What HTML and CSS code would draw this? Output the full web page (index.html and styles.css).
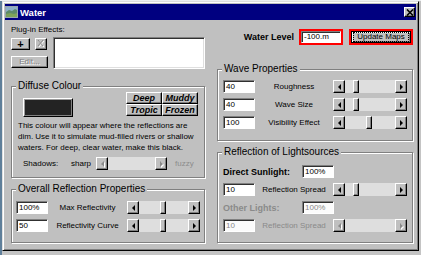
FILE: index.html
```html
<!DOCTYPE html>
<html>
<head>
<meta charset="utf-8">
<title>Water</title>
<link rel="stylesheet" href="styles.css">
</head>
<body>
<div class="desk">
  <div class="window">
    <div class="titlebar">
      <svg class="appicon" width="13" height="12" viewBox="0 0 13 12">
        <rect width="13" height="12" fill="#9aa6b0"/>
        <rect x="1" y="1" width="11" height="10" fill="#8fb0c8"/>
        <path d="M1 6 L4 4 L7 5 L10 3 L12 4 V11 H1Z" fill="#5d8a6a"/>
        <path d="M1 8 L5 7 L9 8 L12 7 V11 H1Z" fill="#7ea35a"/>
      </svg>
      <span class="title">Water</span>
      <span class="close">
        <svg width="8" height="7" viewBox="0 0 8 7"><path d="M1 0.5 L7 6.5 M7 0.5 L1 6.5" stroke="#000" stroke-width="1.6"/></svg>
      </span>
    </div>
    <div class="client">
      <div class="col">
        <div class="plug-label">Plug-in Effects:</div>
        <div class="plug-body">
          <div class="plug-btns">
            <div class="btn-row">
              <button class="btn add">+</button>
              <button class="btn del" disabled>
                <svg width="8" height="8" viewBox="0 0 8 8"><path d="M2 1 L7 7 M7 1 L2 7" stroke="#fff" stroke-width="1"/><path d="M1 0 L6 6 M6 0 L1 6" stroke="#8a8a8a" stroke-width="1"/></svg>
              </button>
            </div>
            <button class="btn edit" disabled>Edit...</button>
          </div>
          <div class="listbox"></div>
        </div>

        <fieldset class="group diffuse">
          <legend>Diffuse Colour</legend>
          <div class="gbody">
            <div class="top-row">
              <div class="swatch"></div>
              <div class="presets">
                <button class="btn preset">Deep</button>
                <button class="btn preset">Muddy</button>
                <button class="btn preset">Tropic</button>
                <button class="btn preset">Frozen</button>
              </div>
            </div>
            <p class="desc">This colour will appear where the reflections are<br>dim. Use it to simulate mud-filled rivers or shallow<br>waters. For deep, clear water, make this black.</p>
            <div class="shadow-row">
              <span class="sh-label">Shadows:</span>
              <span class="sh-sharp">sharp</span>
              <div class="sb sb-shadow disabled"><span class="arr l"></span><span class="track"></span><span class="arr r"></span></div>
              <span class="sh-fuzzy">fuzzy</span>
            </div>
          </div>
        </fieldset>

        <fieldset class="group overall">
          <legend>Overall Reflection Properties</legend>
          <div class="gbody rows">
            <div class="row">
              <div class="field">100%</div>
              <span class="rlabel">Max Reflectivity</span>
              <div class="sb"><span class="arr l"></span><span class="track"><span class="thumb" style="margin-left:21px"></span></span><span class="arr r"></span></div>
            </div>
            <div class="row">
              <div class="field">50</div>
              <span class="rlabel">Reflectivity Curve</span>
              <div class="sb"><span class="arr l"></span><span class="track"><span class="thumb" style="margin-left:21px"></span></span><span class="arr r"></span></div>
            </div>
          </div>
        </fieldset>
      </div>

      <div class="col">
        <div class="water-row">
          <span class="wl-label">Water Level</span>
          <div class="redframe wl-frame"><div class="field wl-field">-100.m</div></div>
          <div class="redframe up-frame"><button class="btn default"><span class="focus">Update Maps</span></button></div>
        </div>

        <fieldset class="group wave">
          <legend>Wave Properties</legend>
          <div class="gbody rows">
            <div class="row">
              <div class="field">40</div>
              <span class="rlabel">Roughness</span>
              <div class="sb"><span class="arr l"></span><span class="track"><span class="thumb" style="margin-left:8px"></span></span><span class="arr r"></span></div>
            </div>
            <div class="row">
              <div class="field">40</div>
              <span class="rlabel">Wave Size</span>
              <div class="sb"><span class="arr l"></span><span class="track"><span class="thumb" style="margin-left:8px"></span></span><span class="arr r"></span></div>
            </div>
            <div class="row">
              <div class="field">100</div>
              <span class="rlabel">Visibility Effect</span>
              <div class="sb"><span class="arr l"></span><span class="track"><span class="thumb" style="margin-left:21px"></span></span><span class="arr r"></span></div>
            </div>
          </div>
        </fieldset>

        <fieldset class="group refl">
          <legend>Reflection of Lightsources</legend>
          <div class="gbody rows">
            <div class="lrow">
              <span class="blabel">Direct Sunlight:</span>
              <div class="field">100%</div>
            </div>
            <div class="row">
              <div class="field">10</div>
              <span class="rlabel">Reflection Spread</span>
              <div class="sb"><span class="arr l"></span><span class="track"><span class="thumb" style="margin-left:8px"></span></span><span class="arr r"></span></div>
            </div>
            <div class="lrow off">
              <span class="blabel">Other Lights:</span>
              <div class="field">100%</div>
            </div>
            <div class="row off">
              <div class="field">10</div>
              <span class="rlabel">Reflection Spread</span>
              <div class="sb disabled"><span class="arr l"></span><span class="track"></span><span class="arr r"></span></div>
            </div>
          </div>
        </fieldset>
      </div>
    </div>
  </div>
</div>
</body>
</html>
```

FILE: styles.css
```css
* { box-sizing: border-box; margin: 0; padding: 0; }

html, body {
  width: 421px;
  height: 255px;
  overflow: hidden;
}

body {
  font-family: "Liberation Sans", Arial, sans-serif;
  font-size: 8px;
  color: #000;
  background: #c6c6c6;
}

.desk {
  width: 421px;
  height: 255px;
  padding: 1px 0 0 2px;
  background:
    linear-gradient(#eef0f2 0 1px, transparent 1px),
    linear-gradient(90deg, #5f7f9a 0 2px, transparent 2px),
    #c4c4c4;
}

.window {
  width: 417px;
  height: 250px;
  background: #c0c0c0;
  border: 1px solid;
  border-color: #dfdfdf #000 #000 #dfdfdf;
  box-shadow: inset 1px 1px #fff, inset -1px -1px #808080;
  padding: 2px;
  display: flex;
  flex-direction: column;
}

/* title bar */
.titlebar {
  height: 16px;
  flex: none;
  background: #000080;
  display: flex;
  align-items: center;
}
.appicon { display: block; margin-right: 2px; }
.title {
  color: #fff;
  font-weight: bold;
  font-size: 9.5px;
  flex: 1;
}
.close {
  width: 11px;
  height: 10px;
  margin-right: 1px;
  background: #c0c0c0;
  border: 1px solid;
  border-color: #fff #000 #000 #fff;
  box-shadow: inset -1px -1px #808080;
  display: flex;
  align-items: center;
  justify-content: center;
}
.close svg { display: block; }

/* client */
.client {
  flex: 1;
  display: grid;
  grid-template-columns: 194px 196px;
  column-gap: 12px;
  padding: 5px 3px 0 6px;
}
.col { display: flex; flex-direction: column; }

/* generic controls */
.btn {
  font: inherit;
  color: #000;
  background: #c0c0c0;
  border: 1px solid;
  border-color: #fff #000 #000 #fff;
  box-shadow: inset -1px -1px #808080;
  padding: 0;
  display: flex;
  align-items: center;
  justify-content: center;
  line-height: 1;
}
.btn:disabled { color: #808080; text-shadow: 1px 1px #fff; }

.field {
  height: 13px;
  background: #fff;
  border: 1px solid;
  border-color: #808080 #fff #fff #808080;
  box-shadow: inset 1px 1px #303030;
  padding: 0 2px;
  line-height: 11px;
  white-space: nowrap;
}

/* plug-in effects */
.plug-label { line-height: 10px; height: 10px; margin-bottom: 2px; }
.plug-body { display: flex; height: 32px; }
.plug-btns {
  width: 37px;
  display: flex;
  flex-direction: column;
  justify-content: space-between;
  padding: 1px 0;
}
.btn-row { display: flex; gap: 5px; }
.add { width: 19px; height: 12px; font-weight: bold; font-size: 11px; }
.del { width: 12px; height: 12px; }
.del svg { display: block; }
.edit { width: 37px; height: 12px; }
.listbox {
  flex: 1;
  margin-left: 5px;
  background: #fff;
  border: 1px solid;
  border-color: #808080 #fff #fff #808080;
  box-shadow: inset 1px 1px #303030, inset -1px -1px #dfdfdf;
}

/* group boxes */
.group {
  border: 1px solid #808080;
  box-shadow: inset 1px 1px #fff, 1px 1px #fff;
  padding: 0;
  margin: 0;
  min-width: 0;
}
.group legend {
  font-size: 10px;
  line-height: 12px;
  padding: 0 2px;
  margin-left: 4px;
  background: #c0c0c0;
}

.diffuse { margin-top: 11px; height: 98px; }
.overall { margin-top: 5px; height: 60px; }
.wave { margin-top: 18px; height: 78px; }
.refl { margin-top: 5px; height: 97px; }

.diffuse .gbody { padding: 0 6px; }
.top-row {
  display: flex;
  justify-content: space-between;
  align-items: flex-start;
  height: 24px;
}
.swatch {
  width: 50px;
  height: 19px;
  margin: 6px 0 0 5px;
  background: #232323;
  border: 1px solid;
  border-color: #fff #000 #000 #fff;
  box-shadow: inset -1px -1px #808080, inset 1px 1px #9a9a9a;
}
.presets {
  display: grid;
  grid-template-columns: 36px 36px;
  grid-template-rows: 12px 12px;
}
.preset {
  font-weight: bold;
  font-style: italic;
  font-size: 9px;
}
.desc {
  margin-top: 4px;
  line-height: 11px;
  white-space: nowrap;
}
.shadow-row {
  margin-top: 4px;
  height: 13px;
  display: flex;
  align-items: center;
  padding-left: 5px;
}
.sh-label { width: 48px; }
.sh-sharp { width: 25px; }
.sb-shadow { width: 71px; margin-right: 8px; }
.sh-fuzzy { color: #8c8c8c; }

/* rows with field / label / slider */
.rows { display: flex; flex-direction: column; gap: 5px; }
.overall .rows { padding: 6px 4px 0; }
.wave .rows { padding: 5px 5px 0; }
.refl .rows { padding: 7px 5px 0; }

.row {
  display: grid;
  grid-template-columns: 32px 1fr 74px;
  align-items: center;
  height: 13px;
}
.overall .row { grid-template-columns: 32px 1fr 73px; }
.rlabel { text-align: center; white-space: nowrap; }

.lrow {
  display: grid;
  grid-template-columns: 79px 32px;
  align-items: center;
  height: 13px;
}
.blabel { font-weight: bold; font-size: 9px; white-space: nowrap; }

.off .blabel, .off .rlabel, .off .field { color: #8a8a8a; }
.off .field { background: #fbfbfb; }

/* scrollbars */
.sb { display: flex; height: 13px; }
.sb .arr {
  width: 12px;
  height: 13px;
  flex: none;
  background: #c0c0c0;
  border: 1px solid;
  border-color: #fff #000 #000 #fff;
  box-shadow: inset -1px -1px #808080;
  display: flex;
  align-items: center;
  justify-content: center;
}
.sb .arr::before {
  content: "";
  width: 0;
  height: 0;
  border-top: 3px solid transparent;
  border-bottom: 3px solid transparent;
}
.sb .arr.l::before { border-right: 3px solid #000; }
.sb .arr.r::before { border-left: 3px solid #000; }
.sb.disabled .arr.l::before { border-right-color: #8a8a8a; }
.sb.disabled .arr.r::before { border-left-color: #8a8a8a; }
.sb.disabled .arr::before { filter: drop-shadow(1px 1px 0 #fff); }
.sb .track {
  flex: 1;
  display: flex;
  background: #dedede;
}
.sb .thumb {
  width: 6px;
  height: 13px;
  background: #c0c0c0;
  border: 1px solid;
  border-color: #fff #000 #000 #fff;
  box-shadow: inset -1px -1px #808080;
}

/* water level */
.water-row {
  margin-top: 4px;
  height: 16px;
  display: flex;
  align-items: center;
  justify-content: flex-end;
}
.wl-label { font-weight: bold; font-size: 9px; margin-right: 5px; }
.redframe { border: 2px solid #f00; height: 16px; }
.wl-frame { width: 44px; }
.wl-field { height: 12px; line-height: 10px; }
.up-frame { width: 64px; margin-left: 6px; }
.default {
  width: 100%;
  height: 12px;
  border: 1px solid #000;
  box-shadow: inset 1px 1px #fff, inset -1px -1px #808080;
  padding: 0 1px;
}
.focus {
  display: block;
  width: 100%;
  height: 10px;
  outline: 1px dotted #000;
  outline-offset: -1px;
  font-size: 8px;
  line-height: 10px;
  text-align: center;
  white-space: nowrap;
}
```
